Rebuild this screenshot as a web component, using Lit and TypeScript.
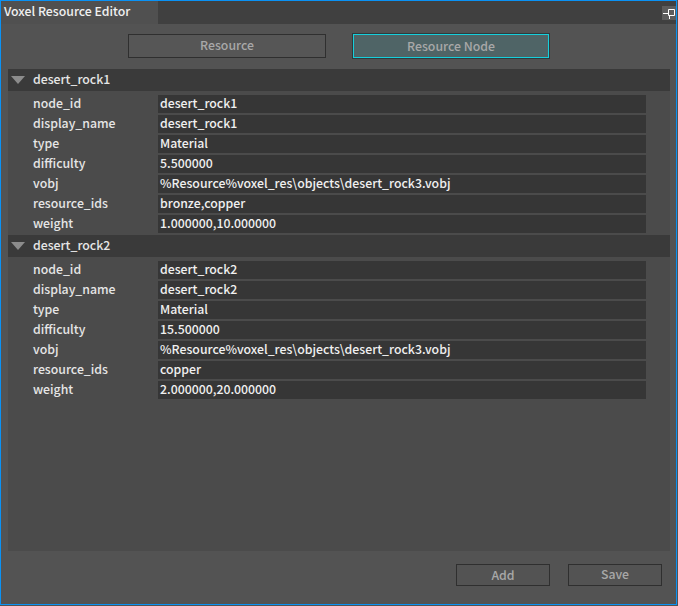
import { LitElement, html, css } from 'lit';
import { customElement } from 'lit/decorators.js';

const NODES = [
  {
    name: 'desert_rock1',
    fields: [
      ['node_id', 'desert_rock1'],
      ['display_name', 'desert_rock1'],
      ['type', 'Material'],
      ['difficulty', '5.500000'],
      ['vobj', '%Resource%voxel_res\\objects\\desert_rock3.vobj'],
      ['resource_ids', 'bronze,copper'],
      ['weight', '1.000000,10.000000'],
    ],
  },
  {
    name: 'desert_rock2',
    fields: [
      ['node_id', 'desert_rock2'],
      ['display_name', 'desert_rock2'],
      ['type', 'Material'],
      ['difficulty', '15.500000'],
      ['vobj', '%Resource%voxel_res\\objects\\desert_rock3.vobj'],
      ['resource_ids', 'copper'],
      ['weight', '2.000000,20.000000'],
    ],
  },
];

@customElement('app-root')
export class AppRoot extends LitElement {
  static styles = css`
    :host {
      display: block;
      width: 678px;
      height: 606px;
      font-family: 'Noto Sans CJK SC', 'Noto Sans', sans-serif;
      font-size: 12.3px;
      font-weight: 500;
      color: #e6e6e6;
      background: #535353;
    }
    .window {
      box-sizing: border-box;
      width: 677px;
      height: 605px;
      border: 1px solid #0a92f5;
      background: #535353;
      display: flex;
      flex-direction: column;
    }
    .titlebar {
      height: 23px;
      display: flex;
      background: #404040;
      justify-content: space-between;
    }
    .tab {
      width: 157px;
      background: #505050;
      padding-left: 3px;
      box-sizing: border-box;
      line-height: 21px;
      color: #f0f0f0;
    }
    .dock {
      width: 14px;
      height: 14px;
      margin-top: 5px;
      background: #5c5c5c;
      display: flex;
    }
    .switch {
      display: flex;
      padding: 10px 0 0 127px;
      gap: 26px;
      height: 24px;
    }
    .btn {
      box-sizing: border-box;
      border: 1px solid #2f2f2f;
      background: #565656;
      color: #a8a8a8;
      text-align: center;
    }
    .switch .btn {
      width: 198px;
      height: 24px;
      line-height: 21px;
    }
    .switch .btn.active {
      width: 196px;
      margin-left: 1px;
      background: #4f6466;
      border: 1px solid #16cfdc;
      outline: 1px solid #2f3a3c;
      line-height: 23px;
    }
    .panel {
      margin: 11px 6px 0 7px;
      height: 482px;
      background: #4b4b4b;
      flex: none;
    }
    .head {
      height: 22px;
      background: #3a3a3a;
      display: flex;
      align-items: center;
      gap: 8px;
      padding-left: 3px;
      line-height: 20px;
    }
    .head span {
      margin-top: -2px;
    }
    .arrow {
      width: 14px;
      height: 8px;
      flex: none;
    }
    .rows {
      padding-top: 4px;
    }
    .row {
      display: grid;
      grid-template-columns: 150px 488px;
      height: 18px;
      margin-bottom: 2px;
      line-height: 17px;
    }
    .label {
      padding-left: 25px;
    }
    .value {
      background: #363636;
      padding-left: 2px;
      color: #f0f0f0;
    }
    .footer {
      display: flex;
      justify-content: flex-end;
      gap: 18px;
      padding: 13px 14px 0 0;
    }
    .footer .btn {
      width: 94px;
      height: 22px;
      line-height: 20px;
      background: #535353;
    }
    .footer .btn.save {
      line-height: 18px;
    }
  `;

  render() {
    return html`
      <div class="window">
        <div class="titlebar">
          <div class="tab">Voxel Resource Editor</div>
          <div class="dock">
            <svg width="14" height="14" viewBox="0 0 14 14">
              <path d="M1 7.5H6M6.5 3.5H12.5V9.5H6.5ZM7.5 9.5V13" fill="none" stroke="#fff" stroke-width="1" />
            </svg>
          </div>
        </div>
        <div class="switch">
          <div class="btn">Resource</div>
          <div class="btn active">Resource Node</div>
        </div>
        <div class="panel">
          ${NODES.map(
            (node) => html`
              <div class="head">
                <svg class="arrow" viewBox="0 0 14 8"><path d="M0 0H14L7 8Z" fill="#8c8c8c" /></svg>
                <span>${node.name}</span>
              </div>
              <div class="rows">
                ${node.fields.map(
                  ([label, value]) => html`
                    <div class="row">
                      <div class="label">${label}</div>
                      <div class="value">${value}</div>
                    </div>
                  `,
                )}
              </div>
            `,
          )}
        </div>
        <div class="footer">
          <div class="btn">Add</div>
          <div class="btn save">Save</div>
        </div>
      </div>
    `;
  }
}
